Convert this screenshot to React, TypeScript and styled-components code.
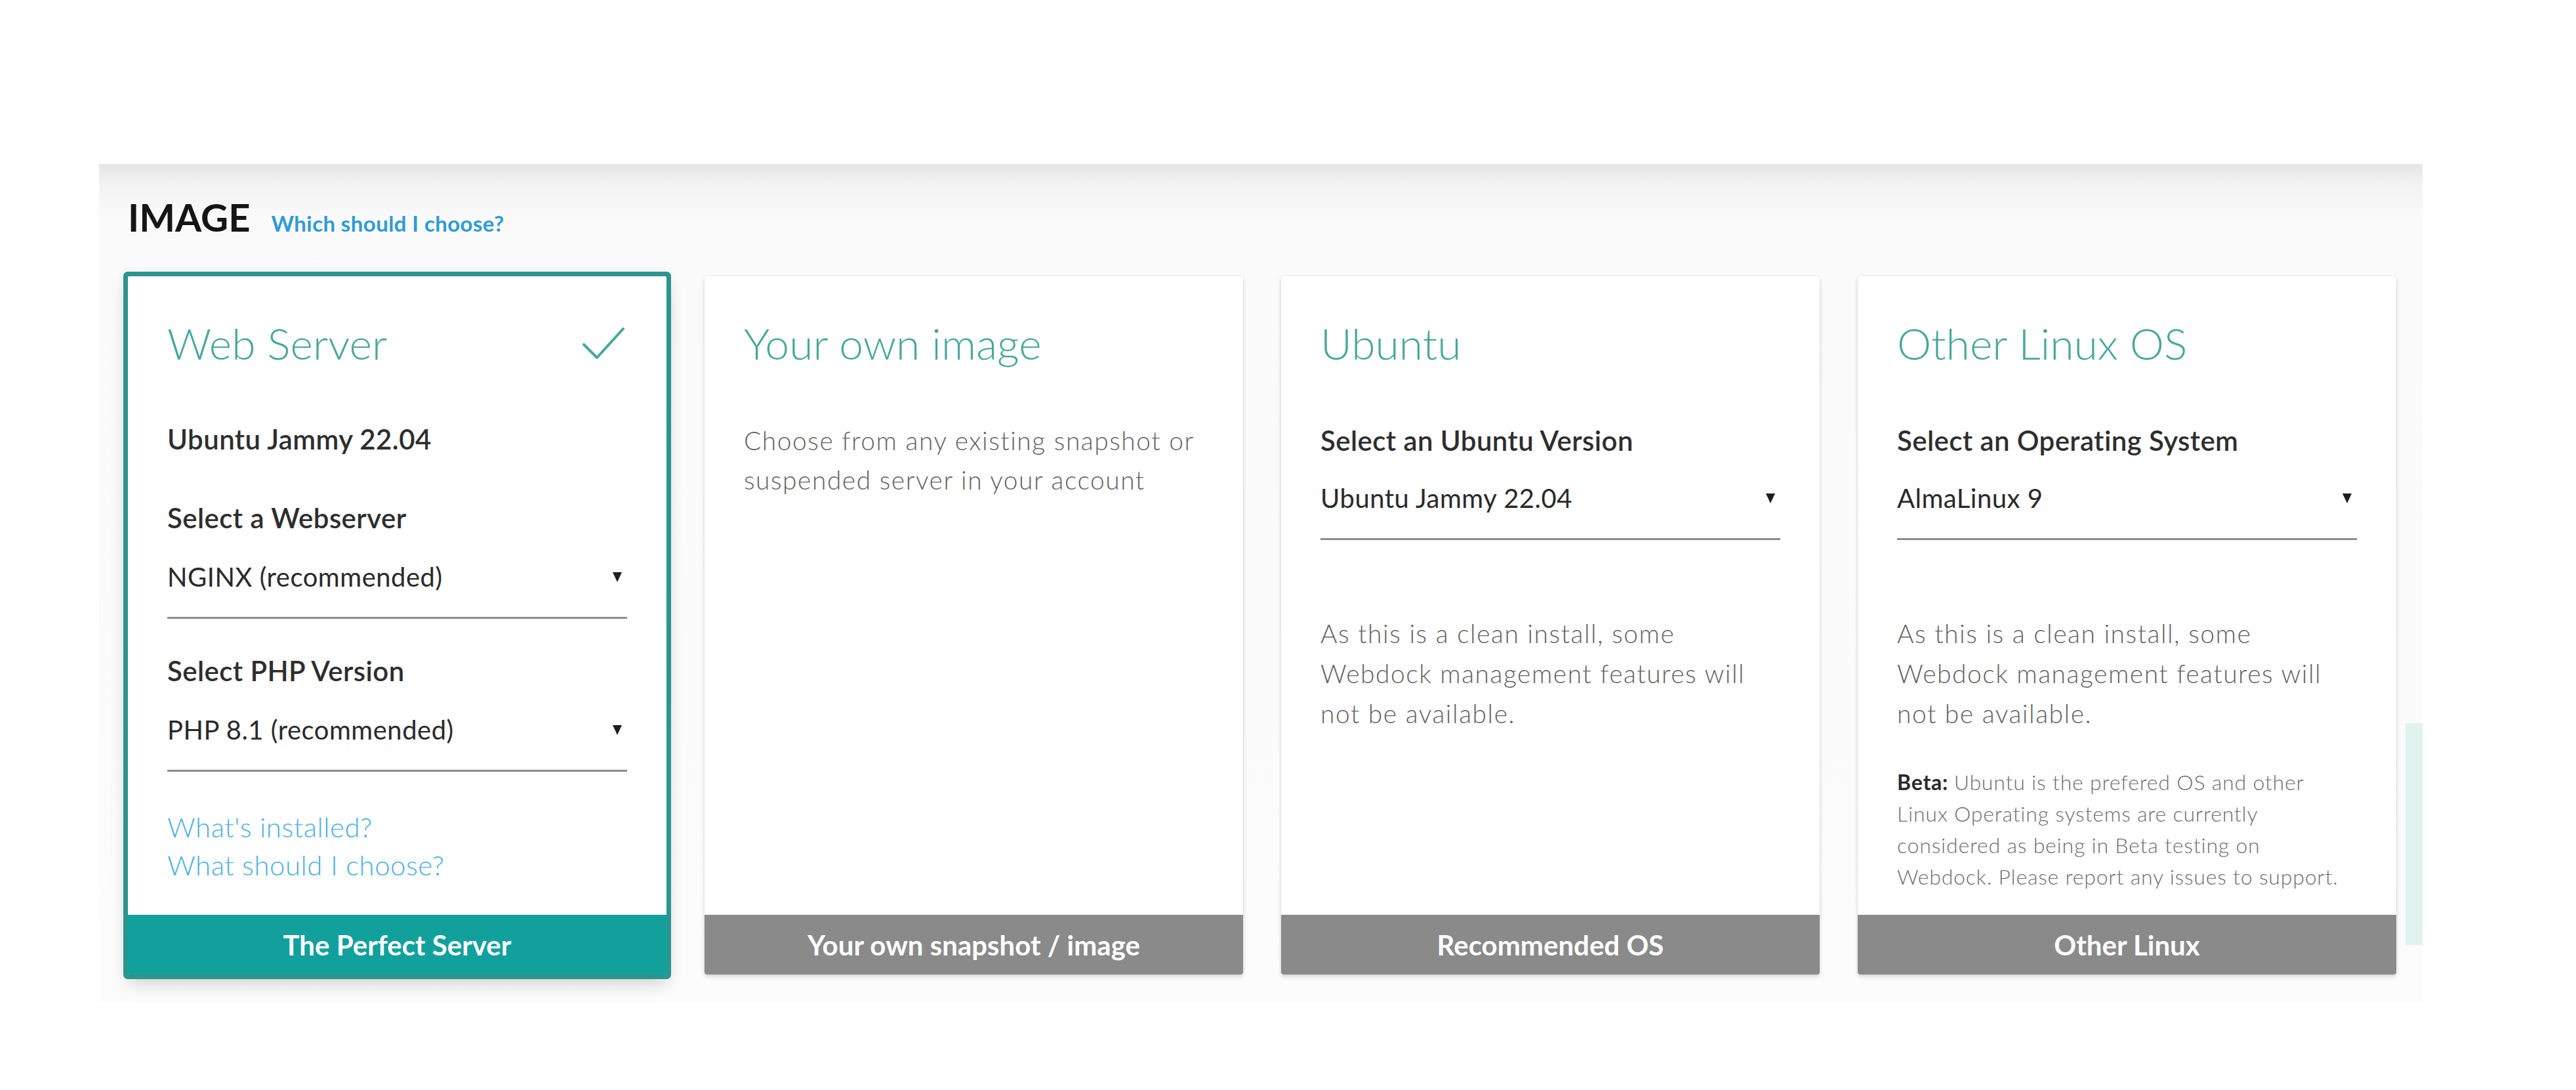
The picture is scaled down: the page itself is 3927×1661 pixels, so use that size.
import React from 'react';
import styled, { createGlobalStyle } from 'styled-components';

const TEAL = '#12a09d';
const RING = '#2b958f';
const MINT = '#48a898';
const GREY_BAR = '#8a8a8a';

const GlobalStyle = createGlobalStyle`
  body {
    margin: 0;
    background: #ffffff;
    font-family: Lato, "Open Sans", "Liberation Sans", sans-serif;
    color: #333333;
  }
`;

interface Option {
  label: string;
  value: string;
  gap: number;
  labelGap: number;
}

interface CardData {
  title: string;
  footer: string;
  selected?: boolean;
  subtitle?: string;
  options?: Option[];
  links?: string[];
  text?: string[];
  textGap?: number;
  textLine?: number;
  beta?: string[];
}

const CARDS: CardData[] = [
  {
    title: 'Web Server',
    footer: 'The Perfect Server',
    selected: true,
    subtitle: 'Ubuntu Jammy 22.04',
    options: [
      { label: 'Select a Webserver', value: 'NGINX (recommended)', gap: 70, labelGap: 40 },
      { label: 'Select PHP Version', value: 'PHP 8.1 (recommended)', gap: 54, labelGap: 40 },
    ],
    links: ["What's installed?", 'What should I choose?'],
  },
  {
    title: 'Your own image',
    footer: 'Your own snapshot / image',
    text: ['Choose from any existing snapshot or', 'suspended server in your account'],
    textGap: 78,
    textLine: 60,
  },
  {
    title: 'Ubuntu',
    footer: 'Recommended OS',
    options: [{ label: 'Select an Ubuntu Version', value: 'Ubuntu Jammy 22.04', gap: 83, labelGap: 38 }],
    text: ['As this is a clean install, some', 'Webdock management features will', 'not be available.'],
    textGap: 112,
    textLine: 61,
  },
  {
    title: 'Other Linux OS',
    footer: 'Other Linux',
    options: [{ label: 'Select an Operating System', value: 'AlmaLinux 9', gap: 83, labelGap: 38 }],
    text: ['As this is a clean install, some', 'Webdock management features will', 'not be available.'],
    textGap: 112,
    textLine: 61,
    beta: [
      'Ubuntu is the prefered OS and other',
      'Linux Operating systems are currently',
      'considered as being in Beta testing on',
      'Webdock. Please report any issues to support.',
    ],
  },
];

const CheckIcon = () => (
  <svg width="64" height="50" viewBox="0 0 64 50" fill="none">
    <polyline points="2,27 22,47 62,3" stroke={MINT} strokeWidth="4" strokeLinecap="round" strokeLinejoin="round" />
  </svg>
);

const ImageCard = ({ card }: { card: CardData }) => (
  <Card $selected={card.selected}>
    <CardBody>
      <TitleRow>
        <CardTitle>{card.title}</CardTitle>
        {card.selected && (
          <CheckWrap>
            <CheckIcon />
          </CheckWrap>
        )}
      </TitleRow>

      {card.subtitle && <Label $mt={81}>{card.subtitle}</Label>}

      {card.options?.map((opt) => (
        <Field key={opt.label} $mt={opt.gap}>
          <Label>{opt.label}</Label>
          <Select $mt={opt.labelGap}>
            <SelectValue>{opt.value}</SelectValue>
            <Caret />
          </Select>
        </Field>
      ))}

      {card.links && (
        <Links>
          {card.links.map((l) => (
            <LinkLine key={l}>{l}</LinkLine>
          ))}
        </Links>
      )}

      {card.text && (
        <Description $mt={card.textGap ?? 0} $line={card.textLine ?? 60}>
          {card.text.map((t) => (
            <span key={t}>{t}</span>
          ))}
        </Description>
      )}

      {card.beta && (
        <BetaNote>
          {card.beta.map((t, i) => (
            <span key={t}>
              {i === 0 && <strong>Beta: </strong>}
              {t}
            </span>
          ))}
        </BetaNote>
      )}
    </CardBody>
    <CardFooter $selected={card.selected}>{card.footer}</CardFooter>
  </Card>
);

const App = () => (
  <>
    <GlobalStyle />
    <Page>
      <Panel>
        <Content>
          <Heading>
            <HeadingTitle>IMAGE</HeadingTitle>
            <HelpLink>Which should I choose?</HelpLink>
          </Heading>
          <CardRow>
            {CARDS.map((c) => (
              <ImageCard key={c.title} card={c} />
            ))}
          </CardRow>
        </Content>
        <ScrollTrack>
          <ScrollThumb />
        </ScrollTrack>
      </Panel>
    </Page>
  </>
);

export default App;

const Page = styled.div`
  width: 3927px;
  height: 1661px;
  box-sizing: border-box;
  padding: 250px 0 0 151px;
  overflow: hidden;
`;

const Panel = styled.section`
  width: 3542px;
  height: 1278px;
  display: flex;
  background: linear-gradient(to bottom, #e5e5e5 0px, #f2f2f2 30px, #fafafa 80px, #fcfcfc 100%);
`;

const Content = styled.div`
  flex: 1;
  padding: 46px 0 0 44px;
`;

const Heading = styled.div`
  display: flex;
  align-items: baseline;
  gap: 32px;
  height: 70px;
  margin-bottom: 55px;
`;

const HeadingTitle = styled.h2`
  margin: 0;
  font-size: 58px;
  line-height: 70px;
  font-weight: 700;
  color: #151515;
`;

const HelpLink = styled.a`
  font-size: 33px;
  font-weight: 700;
  letter-spacing: 0.4px;
  color: #2e9bd6;
  cursor: pointer;
`;

const CardRow = styled.div`
  display: flex;
  gap: 58px;
`;

const Card = styled.div<{ $selected?: boolean }>`
  width: 821px;
  height: 1064px;
  display: flex;
  flex-direction: column;
  background: #ffffff;
  border-radius: ${({ $selected }) => ($selected ? '2px' : '4px')};
  overflow: hidden;
  box-shadow: ${({ $selected }) =>
    $selected
      ? `0 0 0 7px ${RING}, 0 14px 28px rgba(0, 0, 0, 0.16), 0 0 24px rgba(0, 0, 0, 0.08)`
      : '0 3px 6px rgba(0, 0, 0, 0.16), 0 0 3px rgba(0, 0, 0, 0.06)'};
`;

const CardBody = styled.div`
  flex: 1;
  padding: 62px 60px 0;
`;

const TitleRow = styled.div`
  display: flex;
  align-items: center;
  justify-content: space-between;
  height: 80px;
`;

const CardTitle = styled.h3`
  margin: 0;
  font-size: 66px;
  line-height: 80px;
  font-weight: 300;
  color: ${MINT};
`;

const CheckWrap = styled.span`
  display: flex;
  margin-right: 4px;
`;

const Field = styled.div<{ $mt: number }>`
  margin-top: ${({ $mt }) => $mt}px;
`;

const Label = styled.div<{ $mt?: number }>`
  margin-top: ${({ $mt }) => $mt ?? 0}px;
  font-size: 42px;
  line-height: 50px;
  font-weight: 600;
  letter-spacing: 0.4px;
  color: #2e2e2e;
`;

const Select = styled.div<{ $mt: number }>`
  margin-top: ${({ $mt }) => $mt}px;
  display: flex;
  align-items: center;
  justify-content: space-between;
  padding-bottom: 36px;
  border-bottom: 3px solid #8c8c8c;
`;

const SelectValue = styled.span`
  font-size: 40px;
  line-height: 50px;
  font-weight: 400;
  letter-spacing: 0.5px;
  color: #2a2a2a;
`;

const Caret = styled.span`
  width: 0;
  height: 0;
  margin-right: 8px;
  border-left: 7px solid transparent;
  border-right: 7px solid transparent;
  border-top: 15px solid #1e1e1e;
`;

const Links = styled.div`
  display: flex;
  flex-direction: column;
  margin-top: 55px;
`;

const LinkLine = styled.a`
  font-size: 42px;
  line-height: 58px;
  font-weight: 300;
  letter-spacing: 0.5px;
  color: #4cb0e2;
  cursor: pointer;
`;

const Description = styled.p<{ $mt: number; $line: number }>`
  display: flex;
  flex-direction: column;
  margin: ${({ $mt }) => $mt}px 0 0;
  font-size: 39px;
  line-height: ${({ $line }) => $line}px;
  font-weight: 300;
  letter-spacing: 1.5px;
  color: #616161;
  white-space: nowrap;
`;

const BetaNote = styled.p`
  display: flex;
  flex-direction: column;
  margin: 50px 0 0;
  font-size: 32px;
  line-height: 48px;
  font-weight: 300;
  letter-spacing: 0.8px;
  color: #6e6e6e;
  white-space: nowrap;

  strong {
    font-weight: 700;
    color: #2a2a2a;
  }
`;

const CardFooter = styled.div<{ $selected?: boolean }>`
  height: 91px;
  display: flex;
  align-items: center;
  justify-content: center;
  background: ${({ $selected }) => ($selected ? TEAL : GREY_BAR)};
  color: #ffffff;
  font-size: 42px;
  font-weight: 700;
`;

const ScrollTrack = styled.div`
  width: 26px;
`;

const ScrollThumb = styled.div`
  margin-top: 852px;
  height: 338px;
  background: #e2f2ef;
`;
